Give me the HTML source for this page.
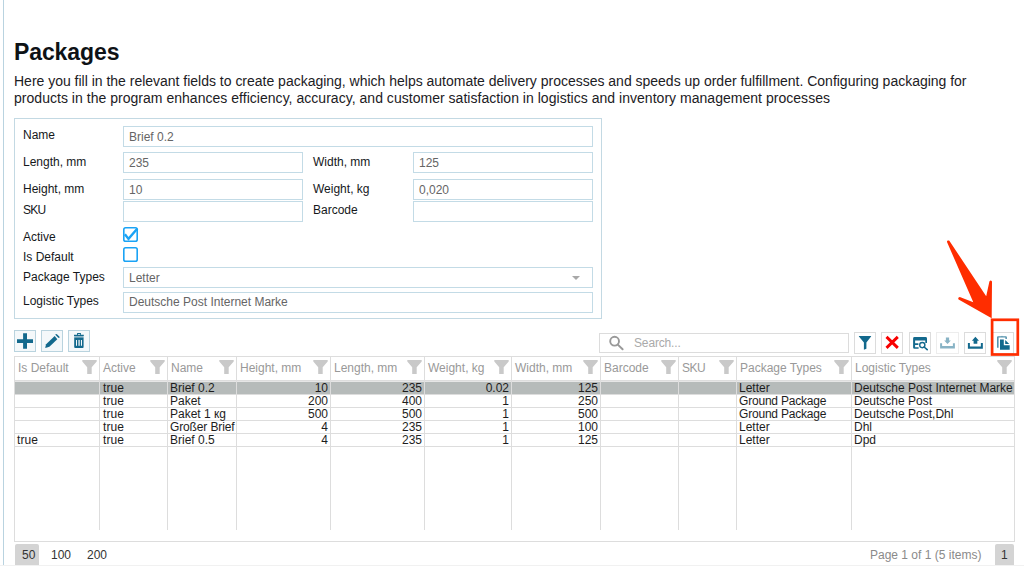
<!DOCTYPE html>
<html>
<head>
<meta charset="utf-8">
<title>Packages</title>
<style>
*{box-sizing:border-box;margin:0;padding:0}
html,body{width:1024px;height:566px;overflow:hidden;background:#fff}
body{font-family:"Liberation Sans",sans-serif;position:relative;color:#1b1b1b}
.abs{position:absolute}
.vline{left:3px;top:0;width:1px;height:565px;background:#b9d3e0}
h1{position:absolute;left:14px;top:38px;font-size:23px;line-height:28px;font-weight:bold;color:#0e1216;white-space:nowrap;letter-spacing:-0.1px}
.desc{position:absolute;left:14px;font-size:14px;line-height:17px;color:#1c2024;white-space:nowrap}
.form{position:absolute;left:14px;top:118px;width:588px;height:201px;border:1px solid #c3d9e3}
.lbl{position:absolute;font-size:12px;line-height:14px;color:#15181b;white-space:nowrap}
.inp{position:absolute;height:21px;border:1px solid #c3dbe6;background:#fff;font-size:12px;line-height:20px;color:#656565;padding-left:5px;white-space:nowrap}
.chk{position:absolute;width:15px;height:15px;border:1.5px solid #1ea4f4;border-radius:2.5px;background:#fff}
.btnl{position:absolute;top:330px;width:22px;height:22px;border:1px solid #b9d3de;background:#f4f8fa}
.btnr{position:absolute;top:332px;width:22px;height:22px;border:1px solid #dcdcdc;background:#fff}
.btnl svg,.btnr svg{position:absolute;left:-1px;top:-1px}
.search{position:absolute;left:599px;top:333px;width:250px;height:20px;border:1px solid #dcdcdc;background:#fff;font-size:12px;line-height:18px;color:#aaa;padding-left:34px;letter-spacing:-0.15px}
.grid{position:absolute;left:14px;top:356px;width:1001px;height:186px;border:1px solid #ddd;border-bottom-color:#ddd}
.hl{position:absolute;left:15px;width:999px;height:1px;background:#ddd}
.vl{position:absolute;top:357px;width:1px;height:173px;background:#ddd}
.sel{position:absolute;left:15px;top:382px;width:999px;height:12px;background:#b6bbba}
.hd{position:absolute;top:361px;font-size:12px;line-height:14px;color:#999;white-space:nowrap}
.fi{position:absolute;top:360px}
.c{position:absolute;font-size:12px;line-height:13px;height:13px;color:#1d1d1d;white-space:nowrap;overflow:hidden}
.pg{position:absolute;top:548px;font-size:12px;line-height:14px;color:#333;white-space:nowrap}
.pgsel{position:absolute;top:544px;height:24px;background:#d4d4d4;border-radius:2px}
</style>
</head>
<body>
<div class="abs vline"></div>
<h1>Packages</h1>
<div class="desc" style="top:73px;letter-spacing:-0.01px">Here you fill in the relevant fields to create packaging, which helps automate delivery processes and speeds up order fulfillment. Configuring packaging for</div>
<div class="desc" style="top:90px;letter-spacing:0.028px">products in the program enhances efficiency, accuracy, and customer satisfaction in logistics and inventory management processes</div>

<div class="form"></div>
<div class="lbl" style="left:23px;top:128px">Name</div>
<div class="lbl" style="left:23px;top:155px">Length, mm</div>
<div class="lbl" style="left:23px;top:182px">Height, mm</div>
<div class="lbl" style="left:23px;top:203px;letter-spacing:-0.7px">SKU</div>
<div class="lbl" style="left:23px;top:230px">Active</div>
<div class="lbl" style="left:23px;top:250px">Is Default</div>
<div class="lbl" style="left:23px;top:270px">Package Types</div>
<div class="lbl" style="left:23px;top:294px">Logistic Types</div>
<div class="lbl" style="left:313px;top:155px">Width, mm</div>
<div class="lbl" style="left:313px;top:182px">Weight, kg</div>
<div class="lbl" style="left:313px;top:203px">Barcode</div>

<div class="inp" style="left:123px;top:126px;width:470px">Brief 0.2</div>
<div class="inp" style="left:123px;top:152px;width:180px">235</div>
<div class="inp" style="left:413px;top:152px;width:180px">125</div>
<div class="inp" style="left:123px;top:179px;width:180px">10</div>
<div class="inp" style="left:413px;top:179px;width:180px">0,020</div>
<div class="inp" style="left:123px;top:201px;width:180px"></div>
<div class="inp" style="left:413px;top:201px;width:180px"></div>
<svg class="abs" style="left:123px;top:227px" width="15" height="15" viewBox="0 0 15 15"><rect x="0.8" y="0.8" width="13.4" height="13.4" rx="1.8" fill="#fff" stroke="#1aa3f5" stroke-width="1.6"/></svg>
<svg class="abs" style="left:123px;top:227px" width="16" height="15" viewBox="0 0 16 15"><path d="M1.9 7.2L5.5 11.9L14.4 1.5" fill="none" stroke="#1aa3f5" stroke-width="2.4"/></svg>
<svg class="abs" style="left:123px;top:247px" width="15" height="15" viewBox="0 0 15 15"><rect x="0.8" y="0.8" width="13.4" height="13.4" rx="1.8" fill="#fff" stroke="#1aa3f5" stroke-width="1.6"/></svg>
<div class="inp" style="left:123px;top:267px;width:470px">Letter</div>
<svg class="abs" style="left:572px;top:276px" width="8" height="4" viewBox="0 0 8 4"><path d="M0 0H8L4 4Z" fill="#a8a8a8"/></svg>
<div class="inp" style="left:123px;top:292px;width:470px;line-height:18.5px">Deutsche Post Internet Marke</div>


<div class="btnl" style="left:14px"><svg width="22" height="22" viewBox="0 0 22 22"><path d="M3 9.3H19V12.9H3ZM9.1 3.2H13V18.8H9.1Z" fill="#13698d"/></svg></div>
<div class="btnl" style="left:41px"><svg width="22" height="22" viewBox="0 0 22 22"><path d="M4.1 18L5.1 14.2L13.7 6.1L16.3 9.2L8.4 16.8Z" fill="#13698d"/><path d="M14.7 4.1Q15.4 3.6 16.2 4.4L18.3 6.6Q18.9 7.4 18.2 8Q17.6 8.2 17 7.6L14.6 5.1Q14.3 4.6 14.7 4.1Z" fill="#13698d"/></svg></div>
<div class="btnl" style="left:68px"><svg width="22" height="22" viewBox="0 0 22 22"><path d="M9.1 3.1H12.9V4.8H15.8V6H6V4.8H9.1ZM10 3.9V4.8H12.1V3.9Z" fill="#13698d"/><path d="M6.2 6H15.6V7.6H6.2Z" fill="#13698d" opacity="0.45"/><path d="M6.2 7.6H15.6V16.9Q15.6 17.9 14.6 17.9H7.2Q6.2 17.9 6.2 16.9Z" fill="#13698d"/><path d="M8 9.9H9V15.8H8ZM13 9.9H14V15.8H13Z" fill="#f4f8fa"/><path d="M10.2 9.9H12.1V15.8H10.2Z" fill="#f4f8fa" opacity="0.7"/></svg></div>


<div class="search">Search...</div>
<svg class="abs" style="left:608px;top:335px" width="17" height="16" viewBox="0 0 17 16"><circle cx="6.6" cy="6.2" r="4.4" fill="none" stroke="#999" stroke-width="1.9"/><path d="M9.8 9.6L14.6 14.2" stroke="#999" stroke-width="2" stroke-linecap="round"/></svg>

<div class="btnr" style="left:854px"><svg width="22" height="22" viewBox="0 0 22 22"><path d="M4.9 3.9H17.1V4.5L12.4 10.6V16.7L9.9 17.7V10.6L4.9 4.5Z" fill="#13698d"/></svg></div>
<div class="btnr" style="left:881px"><svg width="22" height="22" viewBox="0 0 22 22"><path d="M5.5 4.9L16.8 15.9M16.8 4.9L5.5 15.9" stroke="#f80000" stroke-width="2.9" fill="none"/></svg></div>
<div class="btnr" style="left:909px"><svg width="22" height="22" viewBox="0 0 22 22"><path d="M4.1 6.4Q4.1 5 5.5 5H16.6Q18 5 18 6.4V10.9H16.3V8.4H6.1V11.3H9.4V12.9H6.1V15.2H9.6V16.8H5.5Q4.1 16.8 4.1 15.4Z" fill="#13698d"/><circle cx="13.3" cy="13.1" r="2.6" fill="none" stroke="#13698d" stroke-width="1.4"/><path d="M15.1 15L18.2 17.7" stroke="#13698d" stroke-width="1.6" stroke-linecap="round"/></svg></div>
<div class="btnr" style="left:936px;width:23px;opacity:0.5"><svg width="23" height="22" viewBox="0 0 23 22"><path d="M4.1 11.2H6.1V14.1H16.9V11.2H18.9V16.4H4.1Z" fill="#13698d"/><path d="M9.9 5.5H13.1V8.6H14.8L11.5 11.9L8.2 8.6H9.9Z" fill="#13698d"/></svg></div>
<div class="btnr" style="left:964px"><svg width="22" height="22" viewBox="0 0 22 22"><path d="M3.9 11.1H5.9V14.6H16.85V11.1H18.85V16.8H3.9Z" fill="#13698d"/><path d="M11.4 4.8L15 8.7H13.3V11.7H9.6V8.7H7.9Z" fill="#13698d"/></svg></div>
<div class="btnr" style="left:992px"><svg width="22" height="22" viewBox="0 0 22 22"><path d="M5 5.2Q5 4.2 6 4.2H9.4L10 3.7L10.6 4.2H13.9Q14.9 4.2 14.9 5.2V7H13.4V5.6H6.6V15.8H5Z" fill="#13698d" opacity="0.72"/><path d="M8 7.6H11.8V13.2H17.7V17.8H8Z" fill="#13698d"/><path d="M13.2 8.1L17.3 12H13.2Z" fill="#13698d"/></svg></div>


<svg class="abs" style="left:940px;top:235px" width="84" height="125" viewBox="940 235 84 125">
<path d="M947 242Q946.8 240 949 240.6Q949.6 241 950 241.8L986.2 296.2L989.4 281.6Q990.6 279.4 992 281.6L991.7 318.3L958.6 299.4Q957.4 297.8 959.8 297L973.3 302.3Z" fill="#ff2d00"/>
<rect x="992.1" y="319.8" width="25.7" height="34.7" fill="none" stroke="#ff2d00" stroke-width="2.7"/>
</svg>

<div class="grid"></div>
<div class="hl" style="top:380px"></div><div class="hl" style="top:381px;background:#e6e6e6"></div>
<div class="sel"></div>
<div class="hl" style="top:394px"></div>
<div class="hl" style="top:407px"></div>
<div class="hl" style="top:420px"></div>
<div class="hl" style="top:433px"></div>
<div class="hl" style="top:446px"></div>
<div class="vl" style="left:99px"></div>
<div class="vl" style="left:167px"></div>
<div class="vl" style="left:236px"></div>
<div class="vl" style="left:330px"></div>
<div class="vl" style="left:424px"></div>
<div class="vl" style="left:511px"></div>
<div class="vl" style="left:600px"></div>
<div class="vl" style="left:678px"></div>
<div class="vl" style="left:736px"></div>
<div class="vl" style="left:851px"></div>
<div class="hd" style="left:18px">Is Default</div>
<svg class="fi" style="left:82px" width="15" height="14" viewBox="0 0 15 14"><path d="M0.3 0H14.7V1.5L9.7 7.2V14H5.2V7.2L0.3 1.5Z" fill="#c9c9c9"/></svg>
<div class="hd" style="left:103px">Active</div>
<svg class="fi" style="left:150px" width="15" height="14" viewBox="0 0 15 14"><path d="M0.3 0H14.7V1.5L9.7 7.2V14H5.2V7.2L0.3 1.5Z" fill="#c9c9c9"/></svg>
<div class="hd" style="left:171px">Name</div>
<svg class="fi" style="left:219px" width="15" height="14" viewBox="0 0 15 14"><path d="M0.3 0H14.7V1.5L9.7 7.2V14H5.2V7.2L0.3 1.5Z" fill="#c9c9c9"/></svg>
<div class="hd" style="left:240px">Height, mm</div>
<svg class="fi" style="left:313px" width="15" height="14" viewBox="0 0 15 14"><path d="M0.3 0H14.7V1.5L9.7 7.2V14H5.2V7.2L0.3 1.5Z" fill="#c9c9c9"/></svg>
<div class="hd" style="left:334px">Length, mm</div>
<svg class="fi" style="left:407px" width="15" height="14" viewBox="0 0 15 14"><path d="M0.3 0H14.7V1.5L9.7 7.2V14H5.2V7.2L0.3 1.5Z" fill="#c9c9c9"/></svg>
<div class="hd" style="left:428px">Weight, kg</div>
<svg class="fi" style="left:494px" width="15" height="14" viewBox="0 0 15 14"><path d="M0.3 0H14.7V1.5L9.7 7.2V14H5.2V7.2L0.3 1.5Z" fill="#c9c9c9"/></svg>
<div class="hd" style="left:515px">Width, mm</div>
<svg class="fi" style="left:583px" width="15" height="14" viewBox="0 0 15 14"><path d="M0.3 0H14.7V1.5L9.7 7.2V14H5.2V7.2L0.3 1.5Z" fill="#c9c9c9"/></svg>
<div class="hd" style="left:604px">Barcode</div>
<svg class="fi" style="left:661px" width="15" height="14" viewBox="0 0 15 14"><path d="M0.3 0H14.7V1.5L9.7 7.2V14H5.2V7.2L0.3 1.5Z" fill="#c9c9c9"/></svg>
<div class="hd" style="left:682px;letter-spacing:-0.5px">SKU</div>
<svg class="fi" style="left:719px" width="15" height="14" viewBox="0 0 15 14"><path d="M0.3 0H14.7V1.5L9.7 7.2V14H5.2V7.2L0.3 1.5Z" fill="#c9c9c9"/></svg>
<div class="hd" style="left:740px">Package Types</div>
<svg class="fi" style="left:834px" width="15" height="14" viewBox="0 0 15 14"><path d="M0.3 0H14.7V1.5L9.7 7.2V14H5.2V7.2L0.3 1.5Z" fill="#c9c9c9"/></svg>
<div class="hd" style="left:855px">Logistic Types</div>
<svg class="fi" style="left:997px" width="15" height="14" viewBox="0 0 15 14"><path d="M0.3 0H14.7V1.5L9.7 7.2V14H5.2V7.2L0.3 1.5Z" fill="#c9c9c9"/></svg>
<div class="c" style="left:100px;top:382px;width:67px;padding-left:2px;padding-left:3px;letter-spacing:0.1px;">true</div>
<div class="c" style="left:168px;top:382px;width:68px;padding-left:2px;">Brief 0.2</div>
<div class="c" style="left:237px;top:382px;width:93px;text-align:right;padding-right:2px">10</div>
<div class="c" style="left:331px;top:382px;width:93px;text-align:right;padding-right:2px">235</div>
<div class="c" style="left:425px;top:382px;width:86px;text-align:right;padding-right:2px">0.02</div>
<div class="c" style="left:512px;top:382px;width:88px;text-align:right;padding-right:2px">125</div>
<div class="c" style="left:737px;top:382px;width:114px;padding-left:2px;">Letter</div>
<div class="c" style="left:852px;top:382px;width:162px;padding-left:2px;">Deutsche Post Internet Marke</div>
<div class="c" style="left:100px;top:395px;width:67px;padding-left:2px;padding-left:3px;letter-spacing:0.1px;">true</div>
<div class="c" style="left:168px;top:395px;width:68px;padding-left:2px;">Paket</div>
<div class="c" style="left:237px;top:395px;width:93px;text-align:right;padding-right:2px">200</div>
<div class="c" style="left:331px;top:395px;width:93px;text-align:right;padding-right:2px">400</div>
<div class="c" style="left:425px;top:395px;width:86px;text-align:right;padding-right:2px">1</div>
<div class="c" style="left:512px;top:395px;width:88px;text-align:right;padding-right:2px">250</div>
<div class="c" style="left:737px;top:395px;width:114px;padding-left:2px;letter-spacing:-0.2px;">Ground Package</div>
<div class="c" style="left:852px;top:395px;width:162px;padding-left:2px;">Deutsche Post</div>
<div class="c" style="left:100px;top:408px;width:67px;padding-left:2px;padding-left:3px;letter-spacing:0.1px;">true</div>
<div class="c" style="left:168px;top:408px;width:68px;padding-left:2px;">Paket 1 &#1082;g</div>
<div class="c" style="left:237px;top:408px;width:93px;text-align:right;padding-right:2px">500</div>
<div class="c" style="left:331px;top:408px;width:93px;text-align:right;padding-right:2px">500</div>
<div class="c" style="left:425px;top:408px;width:86px;text-align:right;padding-right:2px">1</div>
<div class="c" style="left:512px;top:408px;width:88px;text-align:right;padding-right:2px">500</div>
<div class="c" style="left:737px;top:408px;width:114px;padding-left:2px;letter-spacing:-0.2px;">Ground Package</div>
<div class="c" style="left:852px;top:408px;width:162px;padding-left:2px;">Deutsche Post,Dhl</div>
<div class="c" style="left:100px;top:421px;width:67px;padding-left:2px;padding-left:3px;letter-spacing:0.1px;">true</div>
<div class="c" style="left:168px;top:421px;width:68px;padding-left:2px;letter-spacing:-0.13px;">Gro&szlig;er Brief</div>
<div class="c" style="left:237px;top:421px;width:93px;text-align:right;padding-right:2px">4</div>
<div class="c" style="left:331px;top:421px;width:93px;text-align:right;padding-right:2px">235</div>
<div class="c" style="left:425px;top:421px;width:86px;text-align:right;padding-right:2px">1</div>
<div class="c" style="left:512px;top:421px;width:88px;text-align:right;padding-right:2px">100</div>
<div class="c" style="left:737px;top:421px;width:114px;padding-left:2px;">Letter</div>
<div class="c" style="left:852px;top:421px;width:162px;padding-left:2px;">Dhl</div>
<div class="c" style="left:15px;top:434px;width:84px;padding-left:2px;letter-spacing:0.1px;">true</div>
<div class="c" style="left:100px;top:434px;width:67px;padding-left:2px;padding-left:3px;letter-spacing:0.1px;">true</div>
<div class="c" style="left:168px;top:434px;width:68px;padding-left:2px;">Brief 0.5</div>
<div class="c" style="left:237px;top:434px;width:93px;text-align:right;padding-right:2px">4</div>
<div class="c" style="left:331px;top:434px;width:93px;text-align:right;padding-right:2px">235</div>
<div class="c" style="left:425px;top:434px;width:86px;text-align:right;padding-right:2px">1</div>
<div class="c" style="left:512px;top:434px;width:88px;text-align:right;padding-right:2px">125</div>
<div class="c" style="left:737px;top:434px;width:114px;padding-left:2px;">Letter</div>
<div class="c" style="left:852px;top:434px;width:162px;padding-left:2px;">Dpd</div>

<div class="pgsel" style="left:15px;width:24px"></div>
<div class="pg" style="left:22px">50</div>
<div class="pg" style="left:51px">100</div>
<div class="pg" style="left:87px">200</div>
<div class="pg" style="left:870px;color:#8a8a8a">Page 1 of 1 (5 items)</div>
<div class="pgsel" style="left:995px;width:19px"></div>
<div class="pg" style="left:1001px">1</div>
<div class="abs" style="left:0;top:565px;width:1024px;height:1px;background:#f1f1f1"></div>
</body>
</html>
